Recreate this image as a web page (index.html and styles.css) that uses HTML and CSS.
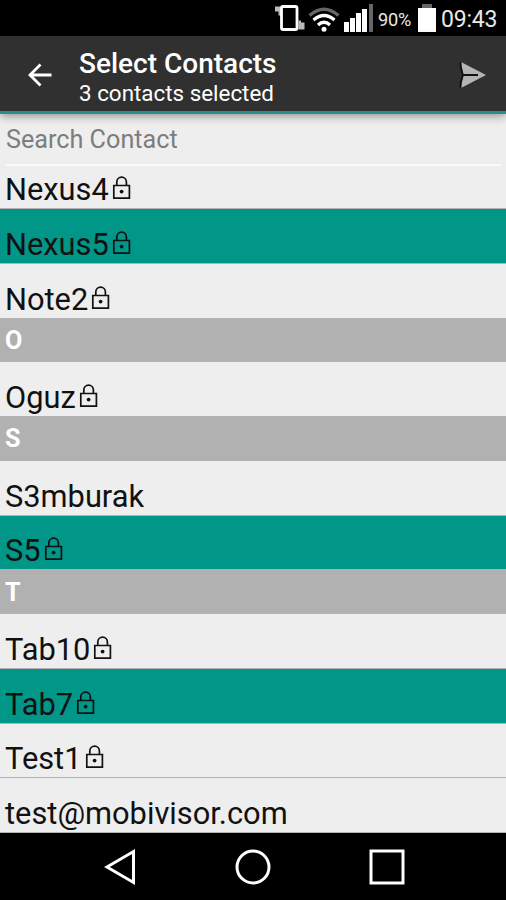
FILE: index.html
```html
<!DOCTYPE html>
<html lang="en">
<head>
  <meta charset="UTF-8">
  <title>Select Contacts</title>
  <link rel="stylesheet" href="styles.css">
</head>
<body>
  <!-- shared lock icon -->
  <svg class="sprite" width="0" height="0">
    <symbol id="lock" viewBox="0 0 20 24">
      <path d="M1.8 9.5h15.6v12.6H1.8zM4.800 9.5V6a4.8 4.8 0 0 1 9.6 0v3.5" fill="none" stroke="currentColor" stroke-width="1.7"/>
      <circle cx="9.6" cy="15.6" r="1.9" fill="currentColor"/>
    </symbol>
  </svg>

  <div class="status-bar">
    <svg class="vibrate" width="32" height="28" viewBox="0 0 32 28">
      <path d="M1 2.500h6v9H4.500v-4H1zM30.500 25.500h-6v-9H27v2h3.500z" fill="#bbb"/>
      <rect x="7.500" y="2.500" width="15.500" height="23" rx="1.500" fill="#000" stroke="#fff" stroke-width="2.8"/>
    </svg>
    <svg class="wifi" width="32" height="26" viewBox="0 0 32 26" fill="none" stroke-width="3.2">
      <path d="M1.5 8.5Q16-4 30.5 8.5" stroke="#666"/>
      <path d="M5.5 13Q16 4 26.5 13" stroke="#fff"/>
      <path d="M10 18Q16 12.5 22 18" stroke="#fff"/>
      <circle cx="16" cy="22.3" r="2.5" fill="#fff"/>
    </svg>
    <svg class="signal" width="30" height="28" viewBox="0 0 30 28" fill="#fff">
      <rect x="0" y="18" width="5" height="10"/>
      <rect x="6" y="14" width="5" height="14"/>
      <rect x="12" y="9" width="5" height="19"/>
      <rect x="18" y="5" width="5" height="23"/>
      <rect x="25" y="0" width="4" height="28" fill="#666"/>
    </svg>
    <span class="percent">90%</span>
    <svg class="battery" width="18" height="28" viewBox="0 0 18 28">
      <rect x="4" y="0" width="10" height="4" fill="#666"/>
      <rect x="0" y="4" width="18" height="24" fill="#fff"/>
    </svg>
    <span class="clock">09:43</span>
  </div>

  <header class="app-bar">
    <svg class="back" width="24" height="24" viewBox="0 0 24 24" fill="none" stroke="#fff" stroke-width="2.8">
      <path d="M23.500 12H2.500M12.500 1.500L2 12l10.500 10.500"/>
    </svg>
    <div class="titles">
      <h1>Select Contacts</h1>
      <p>3 contacts selected</p>
    </div>
    <svg class="send" width="28" height="28" viewBox="0 0 28 28">
      <path d="M2 1L27 14 2 27l2-11.500V12.500z" fill="#b4b4b4"/>
      <path d="M1.500 1v5L4 14l-2.500 8v5M4 14h15" fill="none" stroke="#111" stroke-width="1.8"/>
    </svg>
  </header>

  <main>
    <div class="search">
      <input type="text" placeholder="Search Contact">
    </div>
    <ul class="contacts">
      <li class="first">Nexus4<svg class="lock"><use href="#lock"/></svg></li>
      <li class="selected">Nexus5<svg class="lock"><use href="#lock"/></svg></li>
      <li>Note2<svg class="lock"><use href="#lock"/></svg></li>
      <li class="letter">O</li>
      <li>Oguz<svg class="lock"><use href="#lock"/></svg></li>
      <li class="letter">S</li>
      <li>S3mburak</li>
      <li class="selected">S5<svg class="lock"><use href="#lock"/></svg></li>
      <li class="letter">T</li>
      <li>Tab10<svg class="lock"><use href="#lock"/></svg></li>
      <li class="selected">Tab7<svg class="lock"><use href="#lock"/></svg></li>
      <li>Test1<svg class="lock"><use href="#lock"/></svg></li>
      <li>test@mobivisor.com</li>
    </ul>
  </main>

  <nav class="nav-bar">
    <svg width="32" height="38" viewBox="0 0 32 38"><path d="M29.5 3.5v31L3 19z"/></svg>
    <svg width="36" height="36" viewBox="0 0 36 36"><circle cx="18" cy="18" r="16"/></svg>
    <svg width="36" height="36" viewBox="0 0 36 36"><rect x="2" y="2" width="32" height="32"/></svg>
  </nav>
</body>
</html>
```

FILE: styles.css
```css
* {
  box-sizing: border-box;
}
body {
  margin: 0;
  height: 900px;
  display: flex;
  flex-direction: column;
  overflow: hidden;
  background: #eee;
  color: #111;
  font-family: Roboto, sans-serif;
}
h1, p, ul {
  margin: 0;
  padding: 0;
}
.sprite {
  display: none;
}
.status-bar {
  height: 36px;
  flex: none;
  display: flex;
  align-items: center;
  justify-content: flex-end;
  padding-right: 9px;
  background: #000;
  color: #e8e8e8;
}
.vibrate {
  margin-right: 1px;
}
.wifi {
  margin: 3px 4px 0 1px;
}
.signal {
  margin-right: 1px;
}
.percent {
  width: 36px;
  margin: 2px 4px 0 3px;
  font-size: 18.2px;
  letter-spacing: -0.2px;
}
.clock {
  width: 56px;
  margin: 2px 0 0 5px;
  font-size: 23px;
  letter-spacing: -0.2px;
  white-space: nowrap;
}
.app-bar {
  height: 78px;
  flex: none;
  display: flex;
  align-items: center;
  padding: 0 19px 0 28px;
  background: #303030;
  border-bottom: 3px solid #25918a;
  box-shadow: 0 2px 9px rgba(0, 0, 0, 0.4);
  color: #fff;
  z-index: 1;
}
.back {
  margin-top: 3px;
}
.titles {
  flex: 1;
  margin-left: 27px;
  padding-top: 7px;
}
h1 {
  font-size: 28px;
  font-weight: 500;
  line-height: 32px;
}
.titles p {
  font-size: 22.4px;
  line-height: 27px;
}
.send {
  margin-top: 3px;
}
main {
  height: 719px;
  flex: none;
}
.search {
  height: 52px;
  margin: 0 5px 0 6px;
  border-bottom: 2px solid #fafafa;
}
.search input {
  width: 100%;
  height: 50px;
  padding: 0;
  border: 0;
  background: none;
  font: 25.2px Roboto, sans-serif;
}
.search input::placeholder {
  color: #7d7d7d;
}
.contacts {
  list-style: none;
}
.contacts li {
  display: flex;
  align-items: flex-end;
  height: 54.8px;
  padding: 0 5px;
  border-bottom: 1px solid #b2b2b2;
  font-size: 30.8px;
  line-height: 36px;
}
.contacts .first {
  height: 43px;
}
.contacts .selected {
  background: #009688;
}
.contacts .letter {
  height: 43.7px;
  align-items: center;
  padding-top: 2px;
  background: #b1b1b1;
  color: #fff;
  font-size: 25.2px;
  font-weight: 700;
}
.lock {
  width: 20px;
  height: 24px;
  margin: 0 0 8px 3px;
}
.nav-bar {
  height: 67px;
  flex: none;
  display: flex;
  align-items: center;
  justify-content: space-between;
  padding: 0 101px 0 104px;
  background: #000;
}
.nav-bar svg {
  fill: none;
  stroke: #fff;
  stroke-width: 3;
}
```
